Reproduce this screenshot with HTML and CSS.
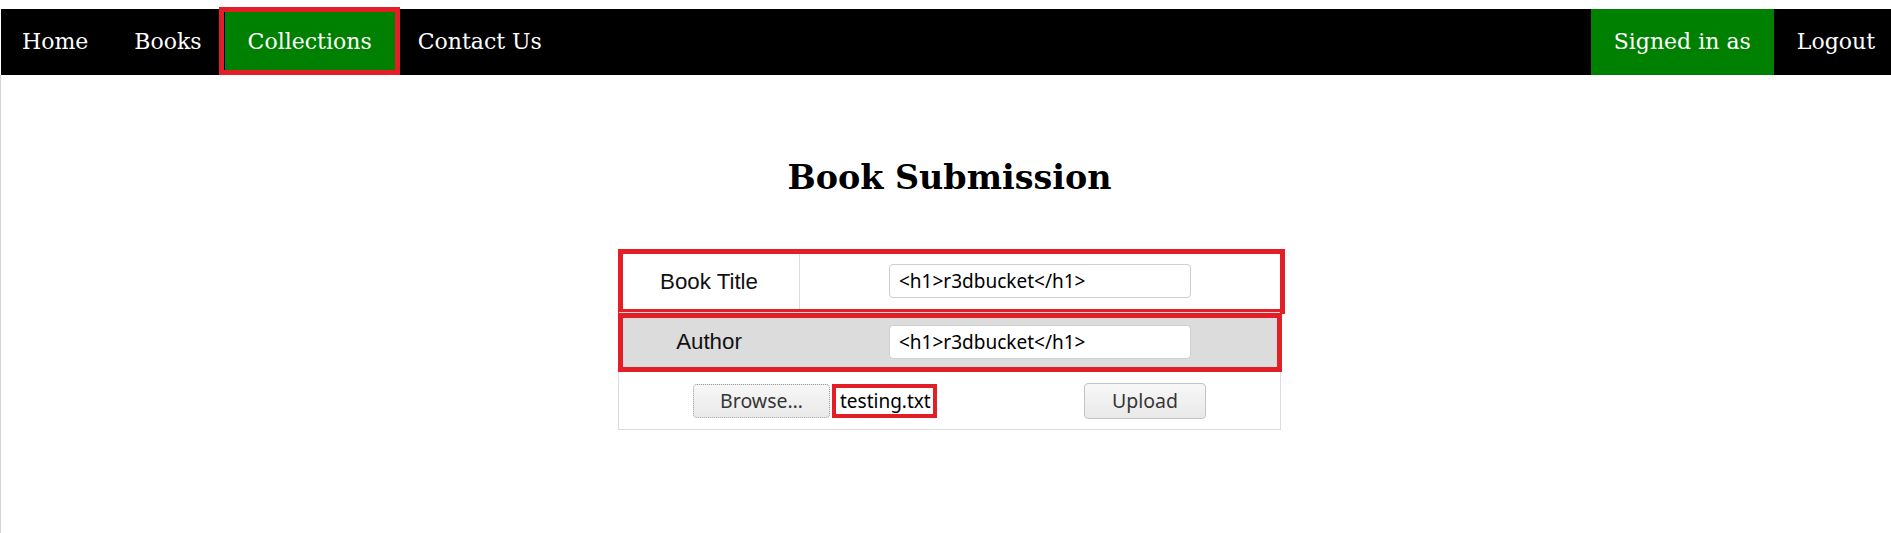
FILE: index.html
```html
<!DOCTYPE html>
<html lang="en">
<head>
<meta charset="utf-8">
<title>Book Submission</title>
<link rel="stylesheet" href="styles.css">
</head>
<body>
<div class="page">
  <nav class="nav">
    <ul class="nav-group">
      <li class="nav-item">Home</li>
      <li class="nav-item">Books</li>
      <li class="nav-item active marked">Collections</li>
      <li class="nav-item">Contact Us</li>
    </ul>
    <ul class="nav-group">
      <li class="nav-item active">Signed in as</li>
      <li class="nav-item">Logout</li>
    </ul>
  </nav>
  <main class="main">
    <h2 class="title">Book Submission</h2>
    <div class="form">
      <div class="row row-title">
        <div class="label">Book Title</div>
        <div class="field"><input class="input" type="text" value="&lt;h1&gt;r3dbucket&lt;/h1&gt;"></div>
        <span class="mark mark-title"></span>
      </div>
      <div class="row row-author">
        <div class="label">Author</div>
        <div class="field"><input class="input" type="text" value="&lt;h1&gt;r3dbucket&lt;/h1&gt;"></div>
        <span class="mark mark-author"></span>
      </div>
      <div class="row row-file">
        <div class="file">
          <span class="btn btn-browse">Browse…</span>
          <span class="filename">testing.txt</span>
        </div>
        <span class="btn btn-upload">Upload</span>
      </div>
    </div>
  </main>
</div>
</body>
</html>
```

FILE: styles.css
```css
html, body {
  margin: 0;
  padding: 0;
  background: #fff;
  overflow: hidden;
}

.page {
  margin-top: 9px;
  width: 1898px;
}

.nav {
  margin-left: 1px;
  display: flex;
  justify-content: space-between;
  background: #000;
  font-family: "DejaVu Serif", serif;
  font-size: 22px;
  line-height: 26px;
  color: #fff;
}

.nav-group {
  display: flex;
  margin: 0;
  padding: 0;
  list-style: none;
}

.nav-item {
  padding: 20px 23px;
  white-space: nowrap;
}

.nav-group:first-child .nav-item:first-child {
  padding-left: 21px;
}

.nav-item.active {
  background: #008000;
}

.marked {
  position: relative;
}

.marked::after {
  content: "";
  position: absolute;
  left: -6px;
  top: -2px;
  width: 181px;
  height: 68px;
  box-sizing: border-box;
  border: 5px solid #e31e26;
}

.main {
  border-left: 1px solid #d4d4d4;
  height: 460px;
  overflow: hidden;
}

.title {
  margin: 83px 0 52px;
  text-align: center;
  font-family: "DejaVu Serif", serif;
  font-weight: bold;
  font-size: 33.4px;
  color: #000;
}

.form {
  width: 661px;
  margin: 0 auto;
  border: 1px solid #dcdcdc;
  position: relative;
  font-family: "Liberation Sans", Arial, sans-serif;
}

.row {
  display: grid;
  grid-template-columns: 180px 1fr;
  align-items: stretch;
  position: relative;
}

.row-title {
  height: 61px;
  border-bottom: 1px solid #dcdcdc;
}

.row-title .label {
  padding-top: 3px;
}

.row-author {
  height: 59px;
  background: #dcdcdc;
  border-bottom: 1px solid #dcdcdc;
}

.label {
  display: flex;
  align-items: center;
  justify-content: center;
  font-size: 22.3px;
  color: #111;
}

.field {
  display: flex;
  align-items: center;
  justify-content: center;
  border-left: 1px solid #dcdcdc;
}

.input {
  width: 302px;
  height: 34px;
  box-sizing: border-box;
  border: 1px solid #cfcfcf;
  border-radius: 4px;
  background: #fff;
  padding: 0 9px;
  font-family: "Noto Sans", sans-serif;
  font-size: 19px;
  color: #000;
}

.mark {
  position: absolute;
  box-sizing: border-box;
  border: 5px solid #e31e26;
  pointer-events: none;
}

.mark-title {
  left: -1px;
  top: -1px;
  width: 667px;
  height: 65px;
}

.mark-author {
  left: -1px;
  top: 1px;
  width: 664px;
  height: 59px;
}

.row-file {
  height: 57px;
  display: flex;
  align-items: center;
  justify-content: center;
  gap: 4px;
}

.file {
  width: 387px;
  display: flex;
  align-items: center;
  gap: 10px;
}

.btn {
  display: inline-flex;
  align-items: center;
  justify-content: center;
  box-sizing: border-box;
  border-radius: 4px;
  background: linear-gradient(#f7f7f7, #e9e9e9);
  font-family: "Noto Sans", sans-serif;
  font-size: 19.5px;
  color: #363636;
}

.btn-browse {
  width: 137px;
  height: 34px;
  border: 1px dotted #9c9c9c;
}

.btn-upload {
  width: 122px;
  height: 36px;
  border: 1px solid #c4c4c4;
}

.filename {
  position: relative;
  font-family: "Noto Sans", sans-serif;
  font-size: 19px;
  color: #000;
}

.filename::after {
  content: "";
  position: absolute;
  left: -8px;
  right: -6px;
  top: -4px;
  bottom: -4px;
  border: 4px solid #e31e26;
}
```
